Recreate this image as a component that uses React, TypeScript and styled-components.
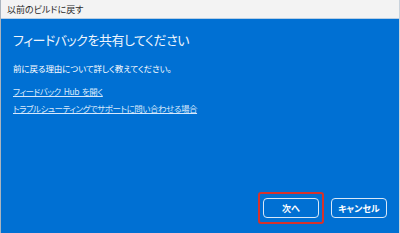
import { createGlobalStyle, styled } from "styled-components";

const GlobalStyle = createGlobalStyle`
  html, body {
    margin: 0;
    padding: 0;
    background: #ffffff;
  }
  body {
    font-family: "Noto Sans CJK JP", "Noto Sans", sans-serif;
    font-feature-settings: "palt";
  }
`;

const Window = styled.div`
  width: 400px;
  height: 233px;
  box-sizing: border-box;
  display: flex;
  flex-direction: column;
  border-left: 1px solid #a9b4bf;
  border-right: 1px solid #c9d3dc;
  overflow: hidden;
`;

const TitleBar = styled.div`
  height: 18px;
  flex-shrink: 0;
  display: flex;
  align-items: center;
  padding-left: 6px;
  background: #f3f3f3;
  border-bottom: 1px solid #b7cde3;
  font-size: 9px;
  color: #2b2b2b;
`;

const Body = styled.div`
  flex: 1;
  display: flex;
  flex-direction: column;
  padding: 0 12px 9px 12px;
  background: #0070d3;
  color: #ffffff;
`;

const Heading = styled.h1`
  margin: 11px 0 0 0;
  font-size: 13px;
  font-weight: 400;
  line-height: 20px;
  letter-spacing: -0.5px;
  color: #eef5fd;
`;

const Message = styled.p`
  margin: 12px 0 0 0;
  font-size: 8.5px;
  line-height: 12px;
  letter-spacing: -0.1px;
`;

const LinkList = styled.div`
  display: flex;
  flex-direction: column;
  gap: 5px;
  margin-top: 11px;
`;

const Link = styled.a`
  font-size: 8.5px;
  line-height: 12px;
  letter-spacing: -0.45px;
  word-spacing: 1.5px;
  color: #d7e8fb;
  text-decoration: underline;
  text-underline-offset: 1px;
  width: fit-content;
`;

const Footer = styled.div`
  margin-top: auto;
  display: flex;
  justify-content: flex-end;
  align-items: center;
  gap: 7px;
`;

const Highlight = styled.div`
  display: flex;
  padding: 4px 3px;
  border: 2px solid #d6322b;
  border-radius: 3px;
`;

const Button = styled.button`
  width: 56px;
  height: 20px;
  box-sizing: border-box;
  border: 1.5px solid #d8e8f8;
  border-radius: 4px;
  background: #0070d3;
  color: #ffffff;
  font-family: inherit;
  font-feature-settings: "palt";
  font-size: 9px;
  font-weight: 600;
  padding: 0;
  display: flex;
  align-items: center;
  justify-content: center;
`;

export default function App() {
  return (
    <>
      <GlobalStyle />
      <Window>
        <TitleBar>以前のビルドに戻す</TitleBar>
        <Body>
          <Heading>フィードバックを共有してください</Heading>
          <Message>前に戻る理由について詳しく教えてください。</Message>
          <LinkList>
            <Link href="#">フィードバック Hub を開く</Link>
            <Link href="#">トラブルシューティングでサポートに問い合わせる場合</Link>
          </LinkList>
          <Footer>
            <Highlight>
              <Button>次へ</Button>
            </Highlight>
            <Button>キャンセル</Button>
          </Footer>
        </Body>
      </Window>
    </>
  );
}
